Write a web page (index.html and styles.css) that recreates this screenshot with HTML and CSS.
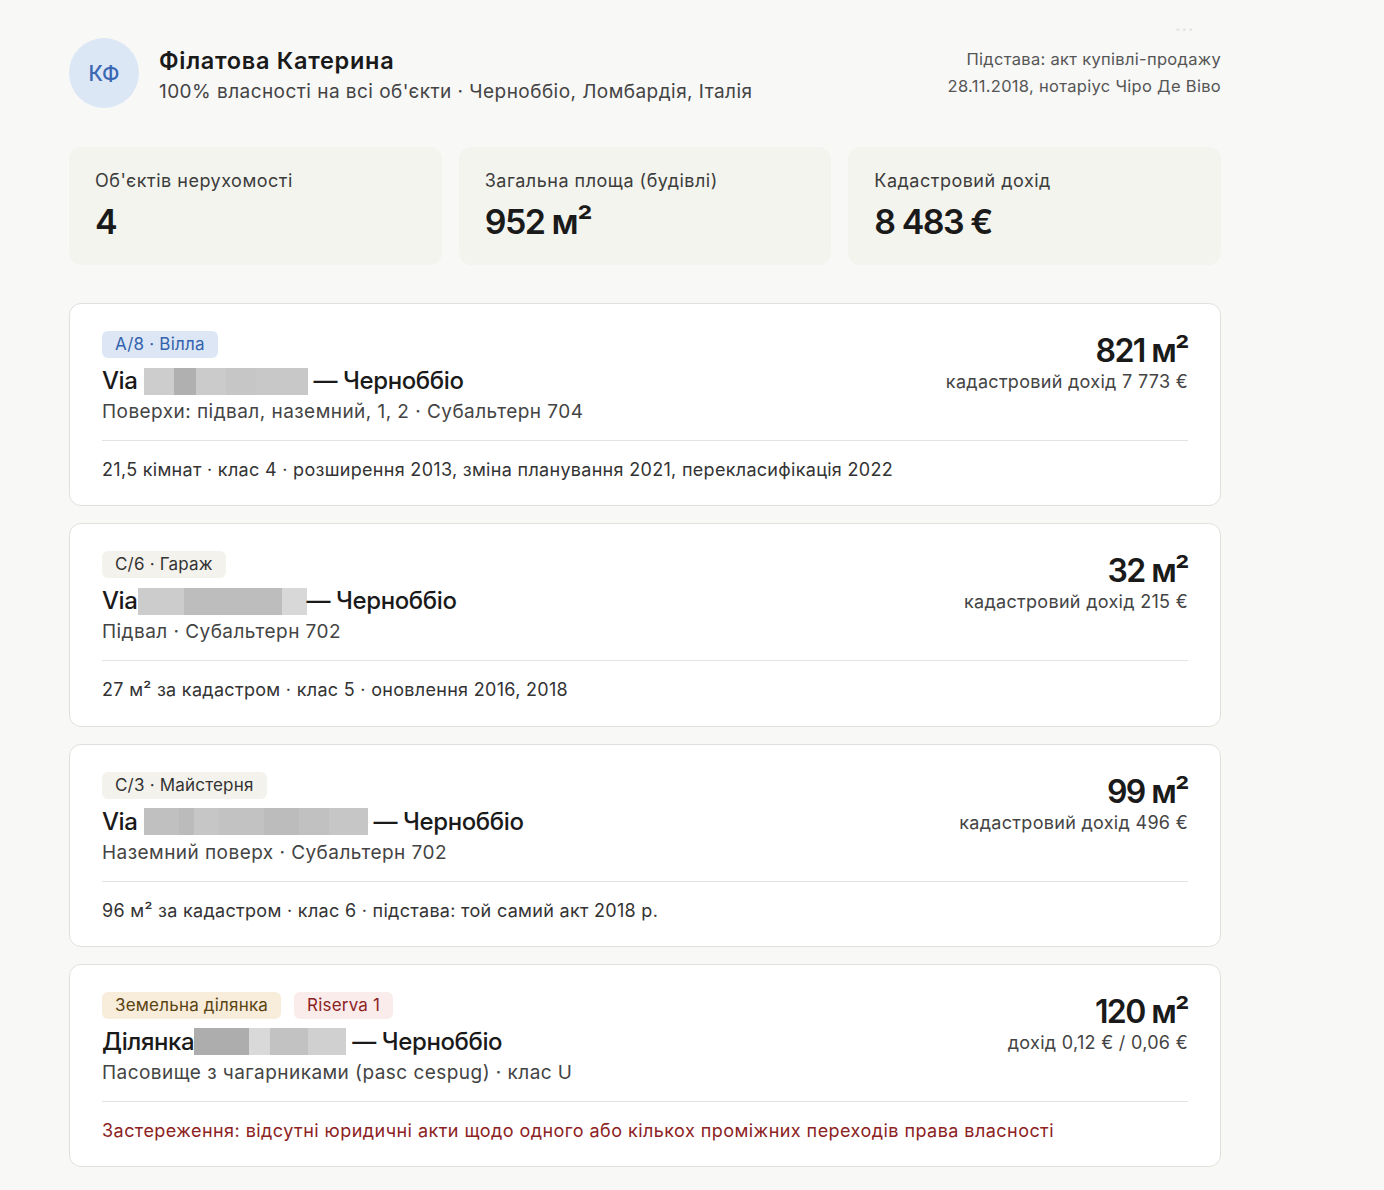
FILE: index.html
```html
<!doctype html>
<html lang="uk">
 <head>
  <meta charset="UTF-8">
  <meta name="viewport" content="width=device-width, initial-scale=1.0">
  <title>Філатова Катерина — нерухомість</title>
  <link rel="stylesheet" href="styles.css">
 </head>
 <body>
  <div class="page">
   <span class="more">•••</span>
   <header class="owner">
    <div class="avatar">КФ</div>
    <div class="owner-info">
     <div class="owner-name">Філатова Катерина</div>
     <div class="owner-sub">100% власності на всі об'єкти · Черноббіо, Ломбардія, Італія</div>
    </div>
    <div class="deed">
     <div>Підстава: акт купівлі-продажу</div>
     <div>28.11.2018, нотаріус Чіро Де Віво</div>
    </div>
   </header>

   <section class="stats">
    <div class="stat">
     <div class="stat-label">Об'єктів нерухомості</div>
     <div class="stat-value">4</div>
    </div>
    <div class="stat">
     <div class="stat-label">Загальна площа (будівлі)</div>
     <div class="stat-value">952 м²</div>
    </div>
    <div class="stat">
     <div class="stat-label">Кадастровий дохід</div>
     <div class="stat-value">8 483 €</div>
    </div>
   </section>

   <section class="props">
    <div class="prop">
     <div class="prop-top">
      <div class="prop-main">
       <div class="tags"><span class="tag tag-blue">A/8 · Вілла</span></div>
       <div class="prop-title">Via <span class="redact"><i style="width:30px;background:#cdcdcd"></i><i style="width:22px;background:#b0b0b0"></i><i style="width:30px;background:#cbcbcb"></i><i style="width:30px;background:#c6c6c6"></i><i style="width:52px;background:#c8c8c8"></i></span> — Черноббіо</div>
       <div class="prop-sub">Поверхи: підвал, наземний, 1, 2 · Субальтерн 704</div>
      </div>
      <div class="prop-side">
       <div class="prop-area">821 м²</div>
       <div class="prop-income">кадастровий дохід 7 773 €</div>
      </div>
     </div>
     <div class="prop-foot">21,5 кімнат · клас 4 · розширення 2013, зміна планування 2021, перекласифікація 2022</div>
    </div>

    <div class="prop">
     <div class="prop-top">
      <div class="prop-main">
       <div class="tags"><span class="tag tag-grey">C/6 · Гараж</span></div>
       <div class="prop-title">Via<span class="redact"><i style="width:46px;background:#cccccc"></i><i style="width:98px;background:#bdbdbd"></i><i style="width:25px;background:#d8d8d8"></i></span>— Черноббіо</div>
       <div class="prop-sub">Підвал · Субальтерн 702</div>
      </div>
      <div class="prop-side">
       <div class="prop-area">32 м²</div>
       <div class="prop-income">кадастровий дохід 215 €</div>
      </div>
     </div>
     <div class="prop-foot">27 м² за кадастром · клас 5 · оновлення 2016, 2018</div>
    </div>

    <div class="prop">
     <div class="prop-top">
      <div class="prop-main">
       <div class="tags"><span class="tag tag-grey">C/3 · Майстерня</span></div>
       <div class="prop-title">Via <span class="redact"><i style="width:35px;background:#c0c0c0"></i><i style="width:15px;background:#bbbbbb"></i><i style="width:25px;background:#c6c6c6"></i><i style="width:45px;background:#c2c2c2"></i><i style="width:35px;background:#bcbcbc"></i><i style="width:30px;background:#c1c1c1"></i><i style="width:39px;background:#c6c6c6"></i></span> — Черноббіо</div>
       <div class="prop-sub">Наземний поверх · Субальтерн 702</div>
      </div>
      <div class="prop-side">
       <div class="prop-area">99 м²</div>
       <div class="prop-income">кадастровий дохід 496 €</div>
      </div>
     </div>
     <div class="prop-foot">96 м² за кадастром · клас 6 · підстава: той самий акт 2018 р.</div>
    </div>

    <div class="prop">
     <div class="prop-top">
      <div class="prop-main">
       <div class="tags"><span class="tag tag-sand">Земельна ділянка</span><span class="tag tag-red">Riserva 1</span></div>
       <div class="prop-title">Ділянка<span class="redact"><i style="width:55px;background:#adadad"></i><i style="width:21px;background:#d9d9d9"></i><i style="width:38px;background:#c2c2c2"></i><i style="width:38px;background:#d0d0d0"></i></span> — Черноббіо</div>
       <div class="prop-sub">Пасовище з чагарниками (pasc cespug) · клас U</div>
      </div>
      <div class="prop-side">
       <div class="prop-area">120 м²</div>
       <div class="prop-income">дохід 0,12 € / 0,06 €</div>
      </div>
     </div>
     <div class="prop-foot warn">Застереження: відсутні юридичні акти щодо одного або кількох проміжних переходів права власності</div>
    </div>
   </section>
  </div>
 </body>
</html>
```

FILE: styles.css
```css
body {
    margin: 0;
    background-color: #f8f8f7;
    font-family: Inter, "Noto Sans", sans-serif;
    color: #1a1a1a;
}
.page {
    position: relative;
    width: 1152px;
    margin-left: 69px;
    padding-top: 38px;
    padding-bottom: 22px;
}
.more {
    position: absolute;
    top: 24px;
    right: 26px;
    font-size: 8px;
    letter-spacing: 2px;
    color: #e2e2e2;
}

/* owner header */
.owner {
    display: flex;
    align-items: flex-start;
}
.avatar {
    width: 70px;
    height: 70px;
    border-radius: 50%;
    background-color: #dce7f6;
    color: #3a68b3;
    font-size: 21px;
    font-weight: 500;
    display: flex;
    align-items: center;
    justify-content: center;
    flex-shrink: 0;
}
.owner-info {
    margin-left: 20px;
    padding-top: 9px;
    flex: 1;
}
.owner-name {
    font-size: 23.5px;
    font-weight: 600;
    letter-spacing: 0.7px;
    line-height: 28px;
}
.owner-sub {
    font-size: 19px;
    color: #444;
    letter-spacing: 0.45px;
    line-height: 30px;
    margin-top: 2px;
}
.deed {
    text-align: right;
    font-size: 16.5px;
    color: #555;
    letter-spacing: 0.3px;
    line-height: 27px;
    padding-top: 8px;
}

/* totals */
.stats {
    display: grid;
    grid-template-columns: repeat(3, 1fr);
    gap: 17px;
    margin-top: 39px;
}
.stat {
    background-color: #f4f4ee;
    border-radius: 12px;
    height: 118px;
    box-sizing: border-box;
    padding: 22px 26px;
}
.stat-label {
    font-size: 18px;
    color: #3c3c3c;
    letter-spacing: 0.5px;
    line-height: 24px;
}
.stat-value {
    font-size: 34px;
    font-weight: 600;
    letter-spacing: -1.5px;
    line-height: 40px;
    margin-top: 9px;
}

/* property cards */
.props {
    display: flex;
    flex-direction: column;
    gap: 17px;
    margin-top: 38px;
}
.prop {
    background-color: #fff;
    border: 1px solid #e0e0dc;
    border-radius: 12px;
    height: 203.3px;
    box-sizing: border-box;
    padding: 27px 32px 0 32px;
}
.prop-top {
    display: flex;
    justify-content: space-between;
    padding-bottom: 13px;
    border-bottom: 1px solid #e2e2df;
}
.tags {
    display: flex;
    gap: 13px;
}
.tag {
    display: inline-block;
    height: 27px;
    line-height: 27px;
    padding: 0 13px;
    border-radius: 6px;
    font-size: 17px;
    letter-spacing: 0.2px;
}
.tag-blue {
    background-color: #dce6f5;
    color: #3463ad;
}
.tag-grey {
    background-color: #f3f2ec;
    color: #333;
}
.tag-sand {
    background-color: #f8ecda;
    color: #5a4412;
}
.tag-red {
    background-color: #fbecec;
    color: #8c2323;
}
.prop-title {
    font-size: 24px;
    font-weight: 500;
    letter-spacing: -0.4px;
    line-height: 30px;
    margin-top: 8px;
    display: flex;
    align-items: center;
    white-space: pre;
}
.redact {
    display: inline-flex;
    height: 27px;
}
.redact i {
    display: block;
    height: 27px;
}
.prop-sub {
    font-size: 19px;
    color: #444;
    letter-spacing: 0.45px;
    line-height: 30px;
    margin-top: 1px;
}
.prop-side {
    text-align: right;
    padding-top: 1px;
}
.prop-area {
    font-size: 32px;
    font-weight: 600;
    letter-spacing: -1.6px;
    line-height: 38px;
}
.prop-income {
    font-size: 18px;
    color: #444;
    letter-spacing: 0.3px;
    line-height: 24px;
}
.prop-foot {
    font-size: 18px;
    color: #333;
    letter-spacing: 0.3px;
    line-height: 24px;
    padding-top: 17px;
}
.prop-foot.warn {
    color: #8c2222;
    letter-spacing: 0.45px;
}
```
